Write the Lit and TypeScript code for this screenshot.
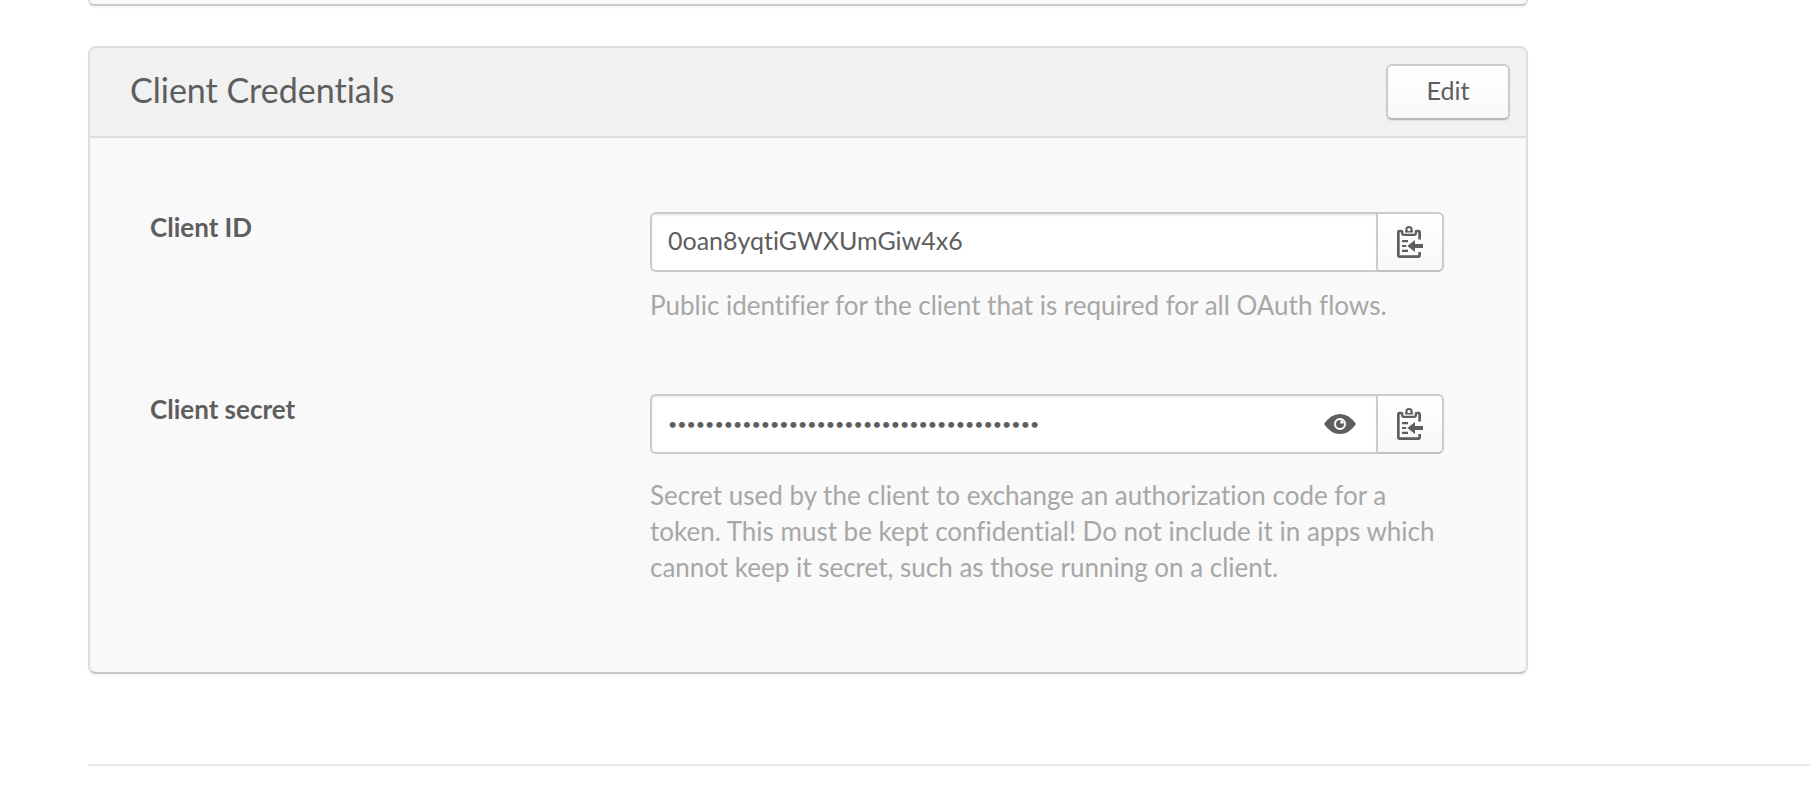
import { LitElement, html, css, svg } from "lit";
import { customElement, property, state } from "lit/decorators.js";

const clipboardIcon = html`
  <svg viewBox="0 0 26 32" width="26" height="32" aria-hidden="true">
    ${svg`
      <path d="M4.6 5H2.6Q1.35 5 1.35 6.3V29.3Q1.35 30.65 2.7 30.65H21.3Q22.65 30.65 22.65 29.3V26M19.4 5H21.4Q22.65 5 22.65 6.3V13.6"
        fill="none" stroke="currentColor" stroke-width="2.7" />
      <path d="M5.1 4.3V6.8Q5.1 8.9 7.2 8.9H16.8Q18.9 8.9 18.9 6.8V4.3"
        fill="none" stroke="currentColor" stroke-width="2.3" />
      <path fill-rule="evenodd" fill="currentColor"
        d="M7.8 6.6Q8.3 5.2 8.3 3.7A3.7 3.7 0 0 1 15.7 3.7Q15.7 5.2 16.2 6.6ZM12 2A1.6 1.6 0 0 0 12 5.2A1.6 1.6 0 0 0 12 2Z" />
      <path fill="currentColor"
        d="M5 14H11V16.2H5ZM5 18.9H9.2V21.1H5ZM5 23.8H11V26H5ZM10.4 20L18 14V18H26V22H18V26Z" />
    `}
  </svg>`;

const eyeIcon = html`
  <svg viewBox="0 0 32 20" width="32" height="20" aria-hidden="true">
    ${svg`
      <path fill="currentColor" d="M0 10Q6.8 0 16 0T32 10Q25.2 20 16 20T0 10Z" />
      <circle cx="16" cy="10" r="5" fill="currentColor" stroke="#fff" stroke-width="2" />
      <path fill="#fff" d="M16.4 9.6V6.2A3.8 3.8 0 0 1 19.8 9.6Z" />
    `}
  </svg>`;

@customElement("copy-field")
export class CopyField extends LitElement {
  static styles = css`
    :host { display: block; }
    .row { display: grid; grid-template-columns: minmax(160px, 500px) minmax(0, 1fr); }
    label { font-size: 26px; font-weight: 700; line-height: 30px; color: #5e5e5e; }
    .group { display: flex; height: 60px; }
    .box {
      box-sizing: border-box;
      flex: 1;
      min-width: 0;
      display: flex;
      align-items: center;
      border: 2px solid #cbcbcb;
      border-right: 0;
      border-radius: 6px 0 0 6px;
      background: #fff;
      box-shadow: inset 0 2px 2px #f0f0f0;
    }
    input {
      flex: 1;
      min-width: 0;
      border: 0;
      outline: 0;
      padding: 0 16px 4px;
      background: transparent;
      color: #5e5e5e;
      font: inherit;
      font-size: 25px;
      line-height: 30px;
      font-variant-ligatures: none;
    }
    input[type="password"] { font-size: 16px; padding-bottom: 0; }
    button { cursor: pointer; color: #5e5e5e; }
    .reveal { display: flex; border: 0; padding: 0; margin-right: 20px; background: none; }
    .copy {
      box-sizing: border-box;
      width: 68px;
      display: flex;
      align-items: center;
      justify-content: center;
      padding: 0;
      border: 2px solid #cbcbcb;
      border-bottom-color: #c0c0c0;
      border-radius: 0 6px 6px 0;
      background: linear-gradient(#fff, #f8f8f8);
    }
    p {
      margin: 15px 0 0;
      color: #a7a7a7;
      font-size: 26px;
      line-height: 36px;
      font-variant-ligatures: none;
    }
    .spaced { margin-top: 23px; }
  `;

  @property() label = "";
  @property() value = "";
  @property({ type: Boolean }) secret = false;
  @state() private revealed = false;

  private copy() {
    navigator.clipboard?.writeText(this.value);
  }

  render() {
    return html`
      <div class="row">
        <label for="value">${this.label}</label>
        <div>
          <div class="group">
            <div class="box">
              <input id="value" readonly .value=${this.value}
                type=${this.secret && !this.revealed ? "password" : "text"} />
              ${this.secret
                ? html`<button class="reveal" aria-label="Show secret"
                    @click=${() => (this.revealed = !this.revealed)}>${eyeIcon}</button>`
                : null}
            </div>
            <button class="copy" aria-label="Copy to clipboard" @click=${this.copy}>${clipboardIcon}</button>
          </div>
          <p class=${this.secret ? "spaced" : ""}><slot></slot></p>
        </div>
      </div>`;
  }
}

@customElement("app-root")
export class AppRoot extends LitElement {
  static styles = css`
    :host {
      display: block;
      padding-left: 88px;
      background: #fff;
      color: #5e5e5e;
      font-family: Lato, "Open Sans", sans-serif;
    }
    .panel {
      box-sizing: border-box;
      max-width: 1440px;
      border: 2px solid #dddddd;
      border-bottom-color: #c8c8c8;
      border-radius: 8px;
      background: #f9f9f9;
      box-shadow: 0 2px 2px #f4f4f4;
    }
    .previous {
      height: 6px;
      border-top: 0;
      border-radius: 0 0 8px 8px;
      margin-bottom: 40px;
    }
    header {
      display: flex;
      align-items: center;
      justify-content: space-between;
      padding: 16px 16px 16px 40px;
      border-bottom: 2px solid #dddddd;
      border-radius: 6px 6px 0 0;
      background: #f1f1f1;
    }
    h2 {
      margin: 0;
      padding-bottom: 4px;
      font-size: 34px;
      font-weight: 400;
      line-height: 40px;
      font-variant-ligatures: none;
    }
    .edit {
      box-sizing: border-box;
      width: 124px;
      height: 56px;
      padding: 0 0 4px;
      border: 2px solid #cbcbcb;
      border-bottom-color: #b8b8b8;
      border-radius: 6px;
      background: linear-gradient(#fff, #f8f8f8);
      box-shadow: 0 1px 1px #dedede;
      color: inherit;
      font: inherit;
      font-size: 25px;
      cursor: pointer;
    }
    .fields {
      display: grid;
      gap: 71px;
      padding: 74px 82px 87px 60px;
    }
    hr {
      margin: 90px 0 0;
      border: 0;
      border-top: 2px solid #ebebeb;
    }
  `;

  render() {
    return html`
      <div class="panel previous"></div>
      <section class="panel">
        <header>
          <h2>Client Credentials</h2>
          <button class="edit">Edit</button>
        </header>
        <div class="fields">
          <copy-field label="Client ID" value="0oan8yqtiGWXUmGiw4x6">Public identifier for the client that is required for all OAuth flows.</copy-field>
          <copy-field label="Client secret" secret value=${"x".repeat(40)}>Secret used by the client to exchange an authorization code for a token. This must be kept confidential! Do not include it in apps which cannot keep it secret, such as those running on a client.</copy-field>
        </div>
      </section>
      <hr />`;
  }
}
